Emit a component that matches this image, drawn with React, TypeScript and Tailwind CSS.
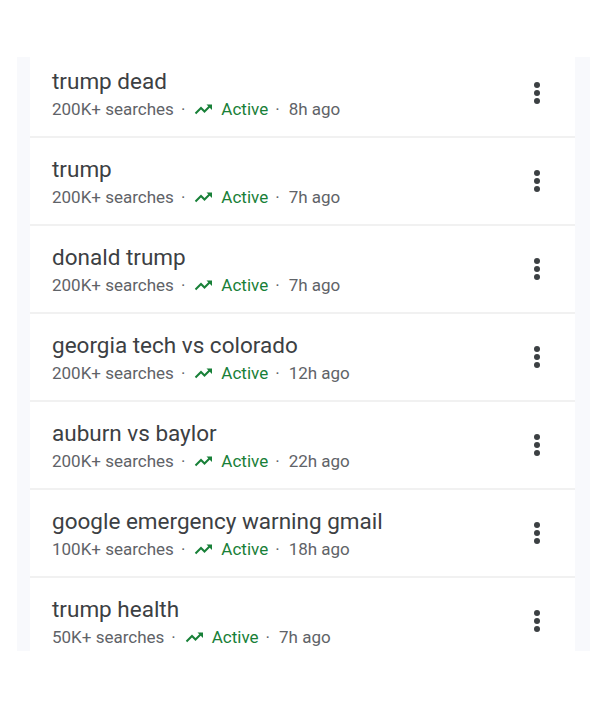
import React from "react";

const rows = [
  { t: "trump dead", s: "200K+ searches", a: "8h ago" },
  { t: "trump", s: "200K+ searches", a: "7h ago" },
  { t: "donald trump", s: "200K+ searches", a: "7h ago" },
  { t: "georgia tech vs colorado", s: "200K+ searches", a: "12h ago" },
  { t: "auburn vs baylor", s: "200K+ searches", a: "22h ago" },
  { t: "google emergency warning gmail", s: "100K+ searches", a: "18h ago" },
  { t: "trump health", s: "50K+ searches", a: "7h ago" },
];

function Trend() {
  return (
    <svg width="20" height="14" viewBox="0 0 20 14" className="shrink-0">
      <path d="M1.5 11.5 L7 6 L10.5 9.5 L16.5 3.5" fill="none" stroke="#188038" strokeWidth="2" strokeLinejoin="miter" />
      <path d="M12.5 2.5 H18 V8 Z" fill="#188038" />
    </svg>
  );
}

function Dots() {
  return (
    <svg width="8" height="24" viewBox="0 0 8 24">
      <circle cx="4" cy="4" r="3" fill="#3c4043" />
      <circle cx="4" cy="12" r="3" fill="#3c4043" />
      <circle cx="4" cy="20" r="3" fill="#3c4043" />
    </svg>
  );
}

export default function App() {
  return (
    <div className="w-[591px] h-[720px] bg-white pt-[57px]" style={{ fontFamily: "Roboto, 'Noto Sans', sans-serif" }}>
      <div className="ml-[17px] w-[573px] h-[594px] bg-[#f8f9fc] pl-[13px] pr-[15px] overflow-hidden">
        <div className="bg-white -mt-[7px] flex flex-col">
          {rows.map((r, i) => (
            <div key={i} className="h-[88px] border-b-2 border-[#f1f1f1] flex items-center pl-[22px] pr-[34px]">
              <div className="flex-1 flex flex-col pt-[4px]">
                <div className="text-[22.5px] leading-[28px] text-[#3c4043]">{r.t}</div>
                <div className="flex items-center text-[17px] leading-[28px] text-[#5f6368]">
                  <span>{r.s}</span>
                  <span className="ml-[7px] mr-[9px]">·</span>
                  <Trend />
                  <span className="ml-[7px] text-[#188038]">Active</span>
                  <span className="ml-[7px] mr-[9px]">·</span>
                  <span>{r.a}</span>
                </div>
              </div>
              <Dots />
            </div>
          ))}
        </div>
      </div>
    </div>
  );
}
